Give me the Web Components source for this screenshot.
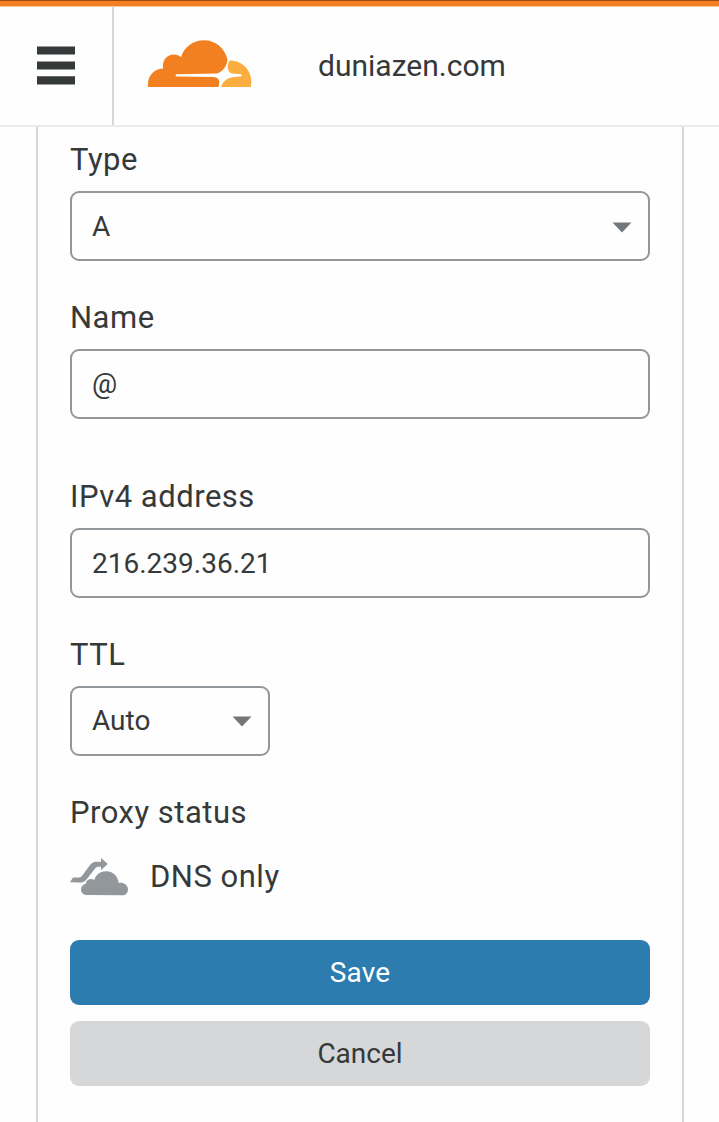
<!DOCTYPE html>
<html lang="en">
<head>
<meta charset="utf-8">
<title>DNS record</title>
<style>
html,body{margin:0;height:100%}
body{background:#fefefe;color:#36393a;font-family:Roboto,"Liberation Sans",sans-serif;overflow:hidden}
</style>
</head>
<body>
<dns-page></dns-page>
<script>
const define = (name, html) => customElements.define(name, class extends HTMLElement {
  constructor() {
    super();
    const t = document.createElement('template');
    t.innerHTML = html;
    this.attachShadow({mode: 'open'}).append(t.content.cloneNode(true));
  }
});

define('menu-icon', `<style>
:host{display:block;width:38px;height:39px}svg{display:block}
</style><svg width="38" height="39" viewBox="0 0 38 39" fill="#36393a"><path d="M0 .5h38v8H0zM0 15.4h38v8H0zM0 30.3h38v8.2H0z"/></svg>`);

define('cloud-logo', `<style>
:host{display:block;width:104px;height:48px}svg{display:block}
</style><svg width="104" height="48" viewBox="0 0 104 48">
<path fill="#f38020" d="M0 47V44C0 35 7 28.500 15 28.500C14 20 19 14.500 26 14.500C29 14.500 31 15.500 33 17.200C36 7.200 45 .3 56 .3C67.500 .3 76.500 8 79.500 19.500C79.200 24 76 31.500 69 33.500L28.500 34.200C27.300 34.400 27.300 36.200 28.500 36.500L65 36.900C70 36.900 72 40 71 44.500L70.300 47Z"/>
<path fill="#faae40" d="M81.500 20.500C94 20.500 103.300 29.700 103.300 41.500C103.300 43.500 103 45.500 102.600 47H73.200C74.500 42 78 37.700 86 36.900L93 36.400C94 36.200 94 34.300 93 34.200L84 33.500C80 32.500 79 28 80.300 23Z"/>
</svg>`);

define('top-bar', `<style>
:host{display:block}
.strip{height:5px;background:#f38020;border-top:1px solid #a04b10}
.bar{display:flex;box-sizing:border-box;height:121px;border-bottom:2px solid #ebebeb;background:linear-gradient(#fbc69b,#fbc69b) top/100% 1px no-repeat #fefefe}
.menu{width:114px;box-sizing:border-box;padding:40px 0 0 37px;border-right:2px solid #d5d7d8;flex:none}
cloud-logo{margin:34px 0 0 34px;flex:none}
.site{margin:40px 0 0 66px;font-size:30px;line-height:40px}
</style><div class="strip"></div><div class="bar"><div class="menu"><menu-icon></menu-icon></div><cloud-logo></cloud-logo><div class="site"><slot></slot></div></div>`);

define('form-label', `<style>
:host{display:block;font-size:31px;line-height:36px;letter-spacing:.5px;height:36px;white-space:nowrap;color:#36393a}
</style><slot></slot>`);

define('text-box', `<style>
:host{display:flex;align-items:center;justify-content:space-between;box-sizing:border-box;width:580px;height:70px;border:2px solid #92979b;border-radius:9px;padding:2px 16px 0 20px;font-size:28px;line-height:34px;color:#36393a;background:#fefefe}
:host([narrow]){width:200px}
:host([raised]){padding-top:0}
svg{display:none}
:host([select]) svg{display:block}
</style><span><slot></slot></span><svg width="20" height="11" viewBox="0 0 20 11"><path fill="#72777b" d="M.5.5h19L10 10.500z"/></svg>`);

define('form-field', `<style>
:host{display:flex;flex-direction:column;gap:13px}
</style><form-label><slot name="label"></slot></form-label><slot></slot>`);

define('proxy-icon', `<style>
:host{display:block;width:58px;height:38px;flex:none}svg{display:block}
</style><svg width="58" height="38" viewBox="0 0 58 38" fill="#92979b">
<path d="M0 24.200L3 19.500H9C10.500 19.500 11.300 18.800 12.300 17.500L20 7C21.500 5 23.500 3.700 26 3.700H31V0L37.800 6L31 12V8.700H28.500C27 8.700 26 9.200 25 10.500L16.500 21.500C14.800 23.500 13 24.400 10.500 24.400Z"/>
<path d="M17 37C13.500 37 11 34.800 11 31.500C11 28.500 13 26.200 15.800 25.700C16 22.500 18.300 21 21.300 21C22.500 21 23.500 21.300 24.300 21.900C26 16.500 30.500 13.200 36.200 13.200C43 13.200 48 18 48.600 24.800C54 24.300 58 27 58 31.500C58 35 55.500 37.300 52 37.300Z"/>
</svg>`);

define('action-button', `<style>
:host{display:flex;align-items:center;justify-content:center;box-sizing:border-box;height:65px;border-radius:9px;background:#d5d7d8;color:#36393a;font-size:28px;line-height:34px}
:host([primary]){background:#2c7cb0;color:#fff;letter-spacing:.2px}
</style><slot></slot>`);

define('dns-page', `<style>
:host{display:block;height:1122px}
main{box-sizing:border-box;width:648px;height:995px;margin-left:36px;padding:15px 32px 0;border:solid #d5d7d8;border-width:0 2px}
form-field{margin-bottom:39px}
.name{margin-bottom:60px}
.status{display:flex;align-items:center;gap:22px;height:40px;margin:26px 0 43px;font-size:31px;line-height:36px;letter-spacing:.5px;color:#36393a}
.buttons{display:grid;gap:16px}
</style>
<top-bar>duniazen.com</top-bar>
<main>
<form-field><span slot="label">Type</span><text-box select>A</text-box></form-field>
<form-field class="name"><span slot="label">Name</span><text-box raised>@</text-box></form-field>
<form-field><span slot="label">IPv4 address</span><text-box>216.239.36.21</text-box></form-field>
<form-field><span slot="label">TTL</span><text-box select narrow raised>Auto</text-box></form-field>
<form-label>Proxy status</form-label>
<div class="status"><proxy-icon></proxy-icon><span>DNS only</span></div>
<div class="buttons"><action-button primary>Save</action-button><action-button>Cancel</action-button></div>
</main>`);
</script>
</body>
</html>
